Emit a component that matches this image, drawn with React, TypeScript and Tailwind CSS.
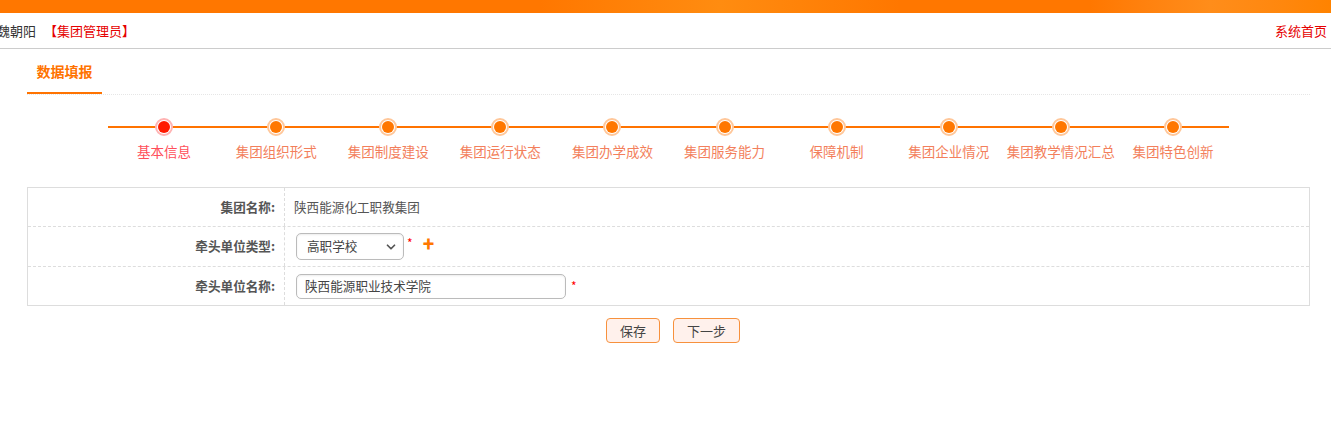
import { ChevronDown } from "lucide-react";

const steps = [
  "基本信息",
  "集团组织形式",
  "集团制度建设",
  "集团运行状态",
  "集团办学成效",
  "集团服务能力",
  "保障机制",
  "集团企业情况",
  "集团教学情况汇总",
  "集团特色创新",
];

const StepBar = () => {
  return (
    <div className="mx-[108px] mt-[23px] flex w-[1121px]">
      {steps.map((step, i) => (
        <div key={step} className="flex w-[112.1px] flex-col items-center">
          <div className="relative flex h-[18px] w-full items-center justify-center">
            <div className="absolute left-0 right-0 top-[8px] h-[2px] bg-[#ff7300]" />
            <div
              className={
                i === 0
                  ? "relative flex h-[18px] w-[18px] items-center justify-center rounded-full border-2 border-[#ffb3b3] bg-white"
                  : "relative flex h-[18px] w-[18px] items-center justify-center rounded-full border-2 border-[#ffc79a] bg-white"
              }
            >
              <div
                className={
                  i === 0
                    ? "h-[12px] w-[12px] rounded-full bg-[#ff1a00]"
                    : "h-[12px] w-[12px] rounded-full bg-[#ff7700]"
                }
              />
            </div>
          </div>
          <span
            className={
              i === 0
                ? "mt-[6px] whitespace-nowrap text-[13.5px] leading-[18px] text-[#ff4f5a]"
                : "mt-[6px] whitespace-nowrap text-[13.5px] leading-[18px] text-[#f37f5c]"
            }
          >
            {step}
          </span>
        </div>
      ))}
    </div>
  );
};

const App = () => {
  return (
    <div className="h-[443px] w-[1331px] overflow-hidden bg-white font-['Noto_Sans_CJK_SC','Liberation_Sans',sans-serif] text-[12.6px] text-[#555]">
      <div className="relative h-[13px] overflow-hidden bg-[#ff7700]">
        <div className="absolute left-[540px] top-0 h-[13px] w-[360px] bg-gradient-to-r from-[#ff7700] via-[#ff8c10] to-[#ff7700]" />
        <div className="absolute left-[1090px] top-0 h-[13px] w-[241px] bg-gradient-to-r from-[#ff7700] via-[#ff8d1a] to-[#ff8300]" />
      </div>
      <div className="flex h-[36px] items-center justify-between border-b border-[#cccccc] text-[13px]">
        <div className="ml-[-3px] flex items-center">
          <span className="text-[#333]">魏朝阳</span>
          <span className="ml-[8px] text-[#e60000]">【集团管理员】</span>
        </div>
        <a className="mr-[4px] text-[#e60000]">系统首页</a>
      </div>
      <div className="ml-[27px] mr-[21px] flex items-end border-b border-dotted border-[#e6e6e6]">
        <div className="flex h-[45px] w-[75px] items-center justify-center border-b-2 border-[#ff7300] pt-[1px] text-[14px] font-bold text-[#ff7300]">
          数据填报
        </div>
      </div>
      <StepBar />
      <div className="ml-[27px] mr-[21px] mt-[27px] border border-[#dddddd]">
        <div className="flex h-[39px] border-b border-dashed border-[#dddddd]">
          <div className="flex w-[257px] items-center justify-end border-r border-dashed border-[#dddddd] pr-[9px] font-bold">
            集团名称:
          </div>
          <div className="flex items-center pl-[9px]">陕西能源化工职教集团</div>
        </div>
        <div className="flex h-[40px] border-b border-dashed border-[#dddddd]">
          <div className="flex w-[257px] items-center justify-end border-r border-dashed border-[#dddddd] pr-[9px] font-bold">
            牵头单位类型:
          </div>
          <div className="flex items-center pl-[11px]">
            <div className="flex h-[27px] w-[108px] items-center justify-between rounded-[5px] border border-[#bbbbbb] pl-[10px] pr-[5px] text-[#444] shadow-[inset_0_1px_2px_rgba(0,0,0,0.08)]">
              <span>高职学校</span>
              <ChevronDown size={14} strokeWidth={3} className="text-[#555]" />
            </div>
            <span className="ml-[3px] mt-[-8px] text-[12px] text-[#ff0000]">*</span>
            <span className="ml-[10px] mt-[-6px] text-[12px] font-bold leading-none text-[#ff7700]">✚</span>
          </div>
        </div>
        <div className="flex h-[38px]">
          <div className="flex w-[257px] items-center justify-end border-r border-dashed border-[#dddddd] pr-[9px] font-bold">
            牵头单位名称:
          </div>
          <div className="flex items-center pl-[11px]">
            <div className="flex h-[25px] w-[270px] items-center rounded-[5px] border border-[#bbbbbb] pl-[8px] text-[#444] shadow-[inset_0_1px_2px_rgba(0,0,0,0.08)]">
              陕西能源职业技术学院
            </div>
            <span className="ml-[5px] text-[12px] text-[#ff0000]">*</span>
          </div>
        </div>
      </div>
      <div className="mt-[12px] flex justify-center gap-[13px] pl-[15px]">
        <button className="h-[25px] w-[54px] rounded-[4px] border border-[#f7913d] bg-[#fff1ec] text-[13px] text-[#444]">
          保存
        </button>
        <button className="h-[25px] w-[67px] rounded-[4px] border border-[#f7913d] bg-[#fff1ec] text-[13px] text-[#444]">
          下一步
        </button>
      </div>
    </div>
  );
};

export default App;
